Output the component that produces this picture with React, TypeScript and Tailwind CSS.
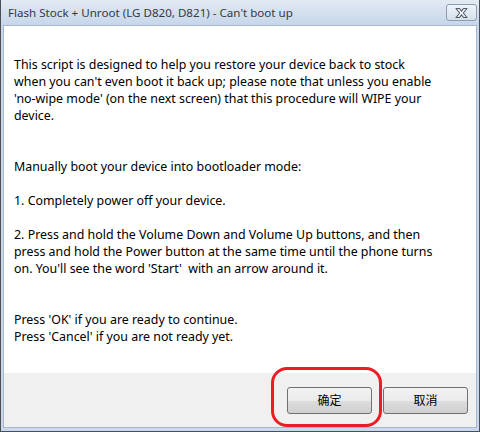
import React from "react";

const lines: string[] = [
  "This script is designed to help you restore your device back to stock",
  "when you can't even boot it back up; please note that unless you enable",
  "'no-wipe mode' (on the next screen) that this procedure will WIPE your",
  "device.",
  "",
  "",
  "Manually boot your device into bootloader mode:",
  "",
  "1. Completely power off your device.",
  "",
  "2. Press and hold the Volume Down and Volume Up buttons, and then",
  "press and hold the Power button at the same time until the phone turns",
  "on. You'll see the word 'Start'  with an arrow around it.",
  "",
  "",
  "Press 'OK' if you are ready to continue.",
  "Press 'Cancel' if you are not ready yet.",
];

function CloseButton() {
  return (
    <div className="flex h-[17px] w-[31px] items-center justify-center rounded-[3px] border border-[#8e9cb0] bg-gradient-to-b from-[#eef3f9] to-[#d6e0ec]">
      <svg width="15" height="12" viewBox="0 0 15 12">
        <path
          d="M2 1.5 L5.5 1.5 L7.5 4.2 L9.5 1.5 L13 1.5 L9.3 6 L13 10.5 L9.5 10.5 L7.5 7.8 L5.5 10.5 L2 10.5 L5.7 6 Z"
          fill="#f4f6f9"
          stroke="#4f5966"
          strokeWidth="1.1"
          strokeLinejoin="round"
        />
      </svg>
    </div>
  );
}

function WinButton({ label }: { label: string }) {
  return (
    <div className="flex h-[27px] w-[85px] items-center justify-center rounded-[3px] border border-[#707070] bg-[linear-gradient(to_bottom,#f2f2f2_0%,#ebebeb_50%,#dddddd_51%,#cfcfcf_100%)] text-[12px] text-black">
      {label}
    </div>
  );
}

export default function App() {
  return (
    <div
      className="relative flex h-[432px] w-[480px] flex-col border-x border-b border-[#4a4f57] bg-[#c9d8ec] pb-[3px]"
      style={{ fontFamily: '"Noto Sans", "Noto Sans CJK SC", sans-serif' }}
    >
      <div className="flex h-[25px] items-center justify-between bg-gradient-to-b from-[#e3eaf3] to-[#c6d6ea] pl-[7px] pr-[2px]">
        <span className="text-[11.6px] text-[#333a44]">
          Flash Stock + Unroot (LG D820, D821) - Can't boot up
        </span>
        <CloseButton />
      </div>
      <div className="mx-[2px] flex flex-1 flex-col border border-[#a9b8cc]">
        <div className="flex-1 bg-white pl-[10px] pt-[30px] text-[12.4px] leading-[17px] text-black">
          {lines.map((l, i) => (
            <div key={i} className="h-[17px] whitespace-pre">
              {l}
            </div>
          ))}
        </div>
        <div className="flex h-[54px] justify-end gap-[11px] bg-[#f0f0f0] pr-[8px] pt-[14px]">
          <WinButton label="确定" />
          <WinButton label="取消" />
        </div>
      </div>
      <div className="absolute left-[270px] top-[367px] h-[60px] w-[111px] rounded-[16px] border-[3px] border-[#ed1c24]" />
    </div>
  );
}
